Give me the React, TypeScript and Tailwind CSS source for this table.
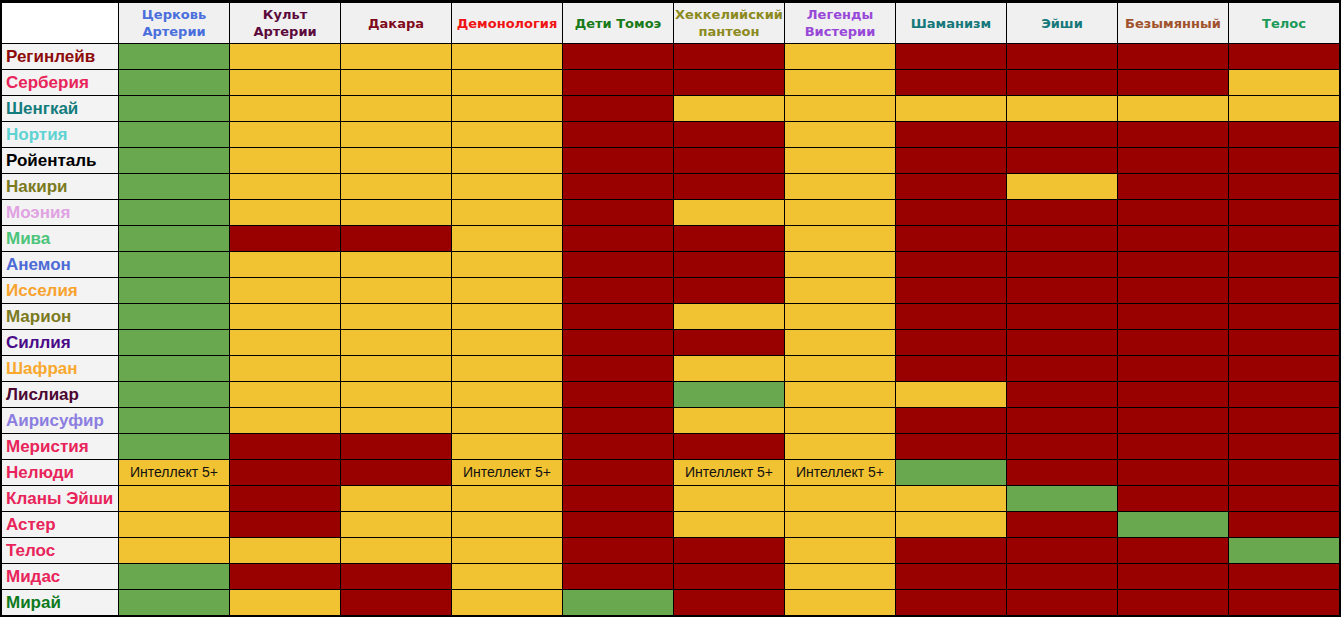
import React from "react";

type Cell = "G" | "Y" | "R" | "T";

const headers: { lines: string[]; color: string }[] = [
  { lines: ["Церковь", "Артерии"], color: "text-[#4a6fdc]" },
  { lines: ["Культ", "Артерии"], color: "text-[#5c0a3c]" },
  { lines: ["Дакара"], color: "text-[#800b1c]" },
  { lines: ["Демонология"], color: "text-[#f01414]" },
  { lines: ["Дети Томоэ"], color: "text-[#187a18]" },
  { lines: ["Хеккелийский", "пантеон"], color: "text-[#8c8a1e]" },
  { lines: ["Легенды", "Вистерии"], color: "text-[#9848d8]" },
  { lines: ["Шаманизм"], color: "text-[#15787a]" },
  { lines: ["Эйши"], color: "text-[#15787a]" },
  { lines: ["Безымянный"], color: "text-[#a0522d]" },
  { lines: ["Телос"], color: "text-[#1a9a58]" },
];

const rows: { name: string; color: string; cells: string }[] = [
  { name: "Регинлейв", color: "text-[#8e0b0b]", cells: "GYYYRRYRRRR" },
  { name: "Серберия", color: "text-[#e8245a]", cells: "GYYYRRYRRRY" },
  { name: "Шенгкай", color: "text-[#137c7c]", cells: "GYYYRYYYYYY" },
  { name: "Нортия", color: "text-[#5fd2d2]", cells: "GYYYRRYRRRR" },
  { name: "Ройенталь", color: "text-black", cells: "GYYYRRYRRRR" },
  { name: "Накири", color: "text-[#7c7a1e]", cells: "GYYYRRYRYRR" },
  { name: "Моэния", color: "text-[#e0a2e2]", cells: "GYYYRYYRRRR" },
  { name: "Мива", color: "text-[#4cc47a]", cells: "GRRYRRYRRRR" },
  { name: "Анемон", color: "text-[#4d6bd6]", cells: "GYYYRRYRRRR" },
  { name: "Исселия", color: "text-[#f8a22e]", cells: "GYYYRRYRRRR" },
  { name: "Марион", color: "text-[#7c7a1e]", cells: "GYYYRYYRRRR" },
  { name: "Силлия", color: "text-[#4a0a88]", cells: "GYYYRRYRRRR" },
  { name: "Шафран", color: "text-[#f8a82e]", cells: "GYYYRYYRRRR" },
  { name: "Лислиар", color: "text-[#4c0632]", cells: "GYYYRGYYRRR" },
  { name: "Аирисуфир", color: "text-[#8c7ee0]", cells: "GYYYRYYRRRR" },
  { name: "Меристия", color: "text-[#e8245a]", cells: "GRRYRRYRRRR" },
  { name: "Нелюди", color: "text-[#e8245a]", cells: "TRRTRTTGRRR" },
  { name: "Кланы Эйши", color: "text-[#e8245a]", cells: "YRYYRYYYGRR" },
  { name: "Астер", color: "text-[#e8245a]", cells: "YRYYRYYYRGR" },
  { name: "Телос", color: "text-[#e8245a]", cells: "YYYYRRYRRRG" },
  { name: "Мидас", color: "text-[#e8245a]", cells: "GRRYRRYRRRR" },
  { name: "Мирай", color: "text-[#0e7a1e]", cells: "GYRYGRYRRRR" },
];

const cellBg: Record<Cell, string> = {
  G: "bg-[#6aa84f]",
  Y: "bg-[#f1c232]",
  R: "bg-[#990000]",
  T: "bg-[#f1c232]",
};

export default function App() {
  return (
    <div className="h-[617px] w-[1341px] bg-black pl-[2px] pt-[3px]">
      <div className="grid grid-cols-[116px_repeat(11,110px)] grid-rows-[40px_repeat(22,25px)] gap-px">
        <div className="bg-white" />
        {headers.map((h) => (
          <div
            key={h.lines.join(" ")}
            className={`flex flex-col items-center justify-center bg-[#f0f0f0] text-[13px] font-bold leading-[17px] ${h.color} [font-family:'DejaVu_Sans',sans-serif]`}
          >
            {h.lines.map((l) => (
              <span key={l}>{l}</span>
            ))}
          </div>
        ))}

        {rows.map((r) => (
          <React.Fragment key={r.name}>
            <div
              className={`flex items-center bg-[#f3f3f3] pl-[4px] text-[17px] font-bold ${r.color} [font-family:'Liberation_Sans',Arial,sans-serif]`}
            >
              {r.name}
            </div>
            {r.cells.split("").map((c, i) => (
              <div
                key={i}
                className={`flex items-center justify-center text-[14px] text-[#111] ${cellBg[c as Cell]} [font-family:'Liberation_Sans',Arial,sans-serif]`}
              >
                {c === "T" ? "Интеллект 5+" : null}
              </div>
            ))}
          </React.Fragment>
        ))}
      </div>
    </div>
  );
}
